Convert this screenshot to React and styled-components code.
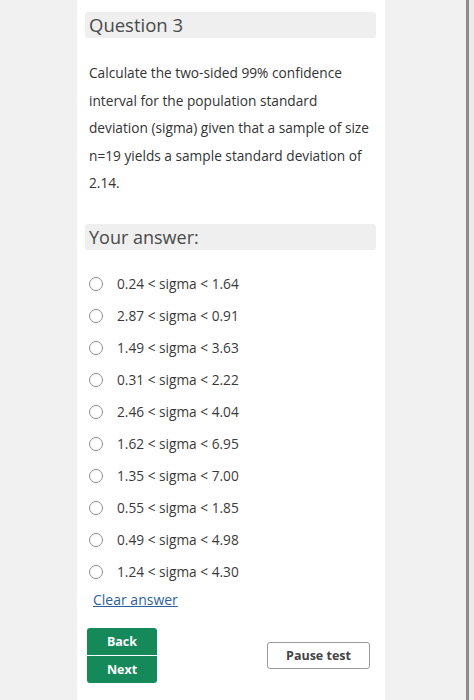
import React, {useState} from 'react';
import styled, {createGlobalStyle} from 'styled-components'

const GlobalStyle = createGlobalStyle`
  body {
    margin: 0;
    background: #f1f1f1;
    font-family: "Open Sans", "Liberation Sans", sans-serif;
  }
`

const Page = styled.div`
  display: flex;
  height: 700px;
  padding-left: 77px;
  overflow: hidden;
`

const Card = styled.div`
  width: 308px;
  background: #fff;
  padding: 12px 9px 0 8px;
  box-sizing: border-box;
`

const Spacer = styled.div`
  flex: 1;
`

const Rail = styled.div`
  width: 5px;
  border-left: 3px solid #8c8c8c;
  background: #ebebeb;
`

const SectionTitle = styled.h2`
  margin: ${p => p.$gap}px 0 0;
  background: #efefef;
  border-radius: 3px;
  height: 26px;
  line-height: 26px;
  padding-left: 4px;
  font-size: ${p => p.$size}px;
  font-weight: 400;
  color: #4a4a4a;
`

const Prompt = styled.p`
  margin: 21px 0 0 4px;
  width: 286px;
  font-size: 13.7px;
  line-height: 27.5px;
  color: #333;
`

const Options = styled.div`
  margin-top: 18px;
  display: flex;
  flex-direction: column;
`

const Option = styled.label`
  display: flex;
  align-items: center;
  height: 32px;
  padding-left: 4px;
  font-size: 13.7px;
  color: #3a3a3a;
  cursor: pointer;
`

const Radio = styled.span`
  width: 14px;
  height: 14px;
  border: 1.5px solid #8f8f8f;
  border-radius: 50%;
  margin-right: 14px;
  box-sizing: border-box;
  display: flex;
  align-items: center;
  justify-content: center;

  &::after {
    content: '';
    width: 6px;
    height: 6px;
    border-radius: 50%;
    background: ${p => p.$on ? '#444' : 'transparent'};
  }
`

const ClearLink = styled.a`
  display: inline-block;
  margin: 1px 0 0 8px;
  font-size: 14px;
  line-height: 18px;
  color: #2d5f9e;
  text-decoration: underline;
  cursor: pointer;
`

const Footer = styled.div`
  display: flex;
  align-items: center;
  justify-content: space-between;
  margin-top: 18px;
  padding: 0 6px 0 2px;
`

const NavStack = styled.div`
  display: flex;
  flex-direction: column;
  gap: 1px;
`

const NavButton = styled.button`
  width: 70px;
  height: 27px;
  border: none;
  border-radius: ${p => p.$top ? '3px 3px 0 0' : '0 0 3px 3px'};
  background: #16895a;
  color: #fff;
  font-family: inherit;
  font-size: 12.5px;
  font-weight: 700;
  cursor: pointer;
`

const PauseButton = styled.button`
  width: 103px;
  height: 27px;
  border: 1.5px solid #9a9a9a;
  border-radius: 3px;
  background: #fff;
  color: #444;
  font-family: inherit;
  font-size: 12.5px;
  font-weight: 700;
  cursor: pointer;
`

const answers = [
  '0.24 < sigma < 1.64',
  '2.87 < sigma < 0.91',
  '1.49 < sigma < 3.63',
  '0.31 < sigma < 2.22',
  '2.46 < sigma < 4.04',
  '1.62 < sigma < 6.95',
  '1.35 < sigma < 7.00',
  '0.55 < sigma < 1.85',
  '0.49 < sigma < 4.98',
  '1.24 < sigma < 4.30',
]

const App = () => {
  const [picked, setPicked] = useState(null)

  return (
    <>
      <GlobalStyle />
      <Page>
        <Card>
          <SectionTitle $gap={0} $size={18.5}>Question 3</SectionTitle>
          <Prompt>
            Calculate the two-sided 99% confidence interval for the population standard
            deviation (sigma) given that a sample of size n=19 yields a sample standard
            deviation of 2.14.
          </Prompt>
          <SectionTitle $gap={27} $size={18}>Your answer:</SectionTitle>
          <Options>
            {answers.map((a, i) => (
              <Option key={i} onClick={() => setPicked(i)}>
                <Radio $on={picked === i} />
                {a}
              </Option>
            ))}
          </Options>
          <ClearLink onClick={() => setPicked(null)}>Clear answer</ClearLink>
          <Footer>
            <NavStack>
              <NavButton $top>Back</NavButton>
              <NavButton>Next</NavButton>
            </NavStack>
            <PauseButton>Pause test</PauseButton>
          </Footer>
        </Card>
        <Spacer />
        <Rail />
      </Page>
    </>
  )
}

export default App;
